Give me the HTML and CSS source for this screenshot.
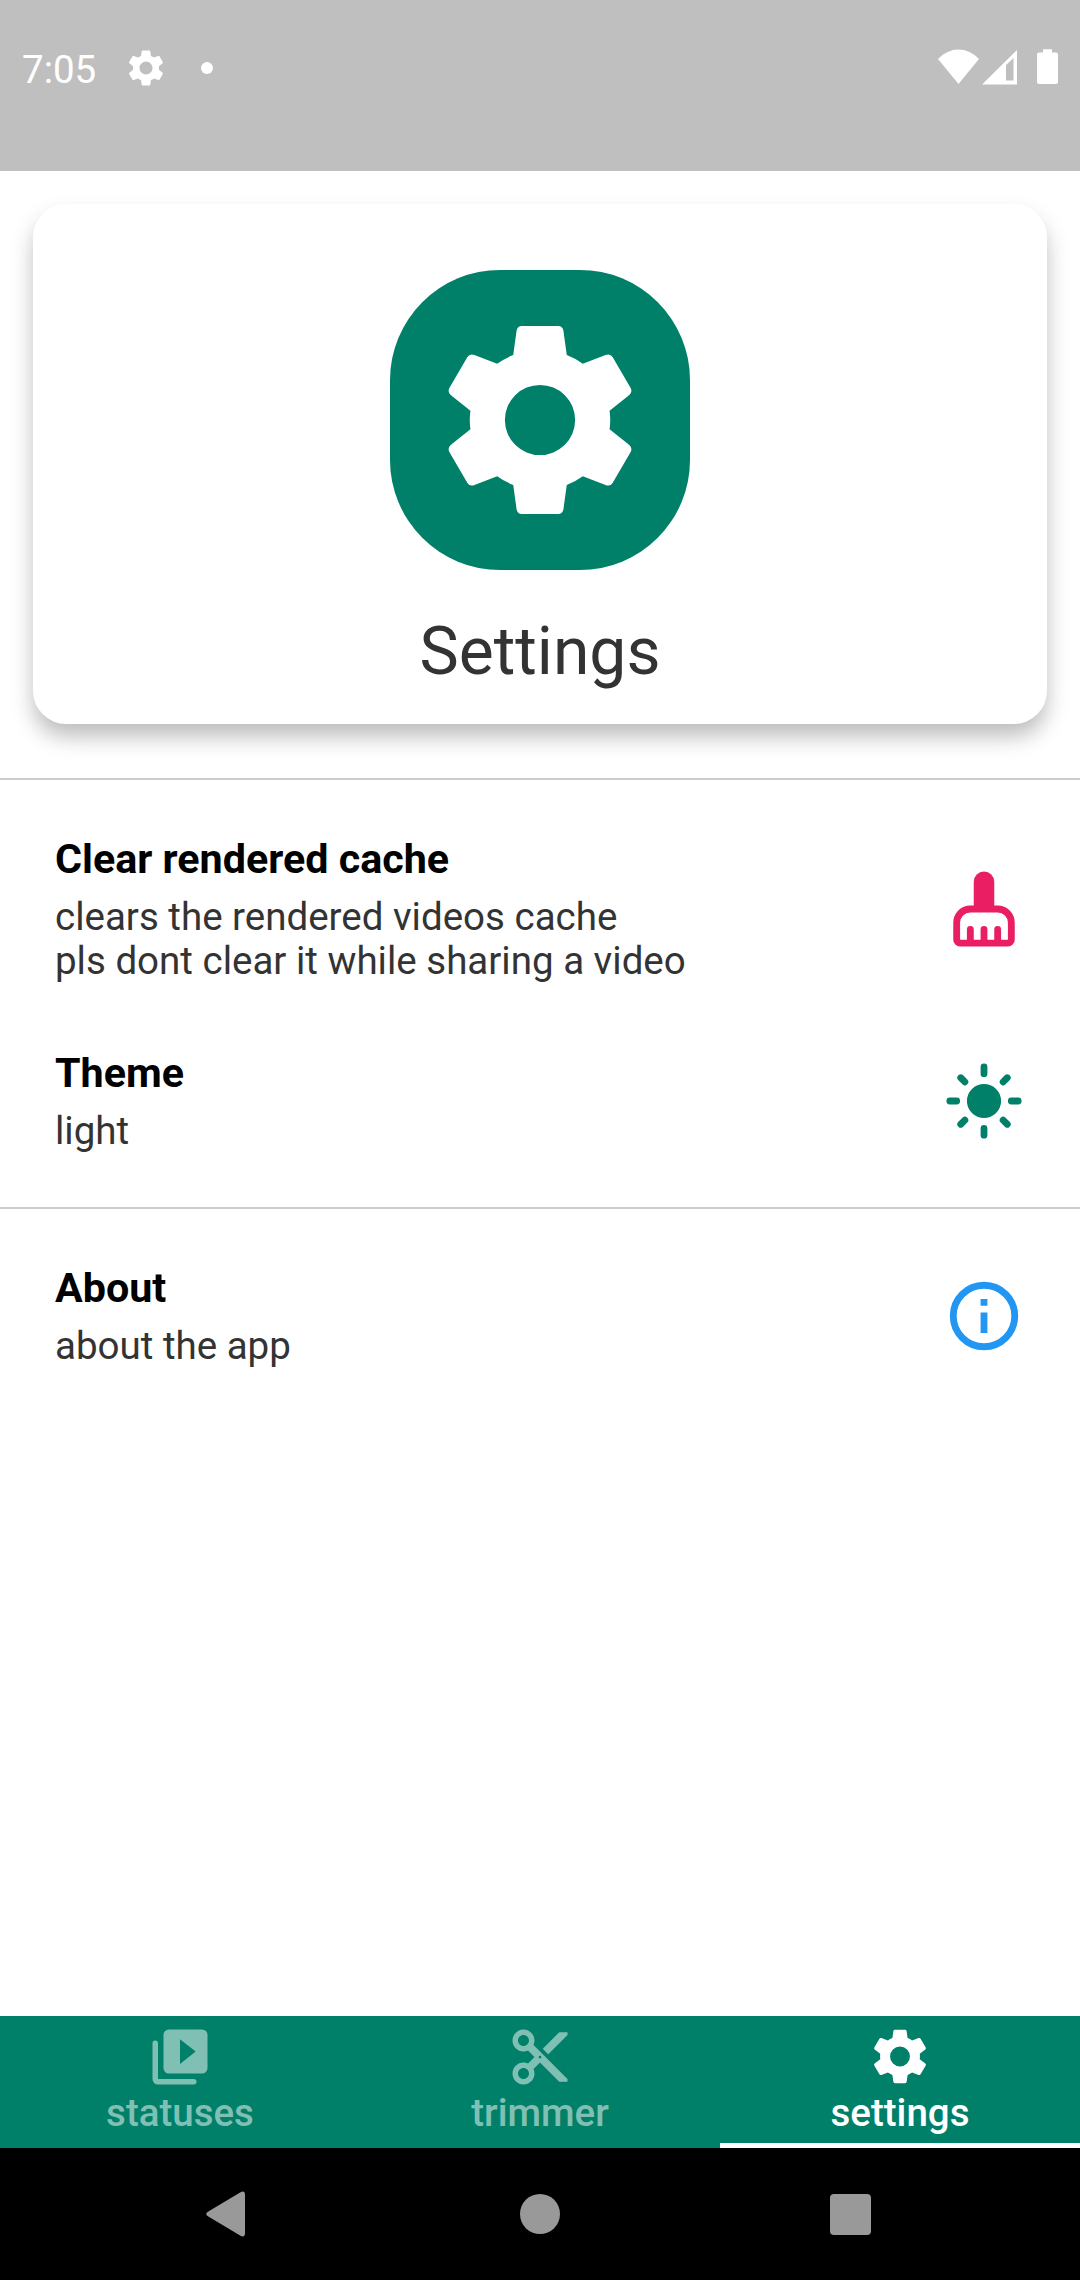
FILE: index.html
```html
<!DOCTYPE html>
<html lang="en">
<head>
<meta charset="utf-8">
<title>Settings</title>
<link rel="stylesheet" href="styles.css">
</head>
<body>
<svg class="defs" width="0" height="0" aria-hidden="true">
  <symbol id="gear" viewBox="-290 -290 580 580">
    <path fill="currentColor" fill-rule="evenodd" d="M-80-194L-70-267Q-68-281-54-281H54Q68-281 70-267L80-194Q106-184 128-168L196-194Q210-199 217-188L271-96Q277-84 267-75L208-28Q212 0 208 28L267 75Q277 84 271 96L217 188Q210 199 196 194L128 168Q106 184 80 194L70 267Q68 281 54 281H-54Q-68 281-70 267L-80 194Q-106 184-128 168L-196 194Q-210 199-217 188L-271 96Q-277 84-267 75L-208 28Q-212 0-208-28L-267-75Q-277-84-271-96L-217-188Q-210-199-196-194L-128-168Q-106-184-80-194ZM0-105A105 105 0 1 0 0 105A105 105 0 1 0 0-105Z"/>
  </symbol>
</svg>
<div class="screen">
  <header class="status-bar">
    <span class="clock">7:05</span>
    <svg class="status-gear"><use href="#gear"/></svg>
    <span class="dot"></span>
    <svg class="status-icons" viewBox="0 0 122 40">
      <path fill="#fff" d="M0 12Q9 2.500 20.500 2.500T41 12L20.500 37Z"/>
      <path fill="#fff" fill-rule="evenodd" d="M44 37.500L79 3V37.500ZM68 18V33.500H75.500V11Z"/>
      <path fill="#fff" d="M105 2.200H114V5.500H118Q120 5.500 120 7.500V35Q120 37 118 37H101Q99 37 99 35V7.500Q99 5.500 101 5.500H105Z"/>
    </svg>
  </header>
  <main class="content">
    <section class="card">
      <div class="badge"><svg><use href="#gear"/></svg></div>
      <h1>Settings</h1>
    </section>
    <section class="group">
      <div class="row">
        <div><h2>Clear rendered cache</h2><p>clears the rendered videos cache<br>pls dont clear it while sharing a video</p></div>
        <svg class="icon pink" viewBox="0 0 24 24">
          <path fill="currentColor" d="M9 12V4a3 3 0 0 1 6 0v8z"/>
          <path d="M8 12h8a4 4 0 0 1 4 4v5a1 1 0 0 1-1 1H5a1 1 0 0 1-1-1v-5a4 4 0 0 1 4-4zM8 22v-4M12 22v-4M16 22v-4" fill="none" stroke="currentColor" stroke-width="2" stroke-linecap="round"/>
        </svg>
      </div>
      <div class="row">
        <div><h2>Theme</h2><p>light</p></div>
        <svg class="icon green" viewBox="0 0 24 24">
          <circle cx="12" cy="12" r="5" fill="currentColor"/>
          <path d="M12 2v2M12 20v2M2 12h2M20 12h2M5.200 5.200l1.200 1.200M17.600 17.600l1.200 1.200M5.200 18.800l1.200-1.200M17.600 6.400l1.200-1.200" fill="none" stroke="currentColor" stroke-width="2" stroke-linecap="round"/>
        </svg>
      </div>
    </section>
    <section class="group">
      <div class="row">
        <div><h2>About</h2><p>about the app</p></div>
        <svg class="icon blue" viewBox="0 0 24 24">
          <circle cx="12" cy="12" r="9" fill="none" stroke="currentColor" stroke-width="2"/>
          <path fill="currentColor" d="M11 7h2v2h-2zM11 11h2v6h-2z"/>
        </svg>
      </div>
    </section>
  </main>
  <nav class="tabs">
    <div class="tab">
      <svg viewBox="0 0 24 24">
        <path fill="currentColor" fill-rule="evenodd" d="M8 2h12a2 2 0 0 1 2 2v12a2 2 0 0 1-2 2H8a2 2 0 0 1-2-2V4a2 2 0 0 1 2-2zM12 5.500v9l5.700-4.500z"/>
        <path d="M3 7v13a1 1 0 0 0 1 1h13" fill="none" stroke="currentColor" stroke-width="2" stroke-linecap="round"/>
      </svg>
      <span>statuses</span>
    </div>
    <div class="tab">
      <svg viewBox="0 0 24 24"><path fill="currentColor" d="M9.640 7.640c.23-.5.36-1.050.36-1.640 0-2.210-1.790-4-4-4S2 3.790 2 6s1.790 4 4 4c.59 0 1.140-.13 1.640-.36L10 12l-2.360 2.360C7.140 14.130 6.590 14 6 14c-2.210 0-4 1.790-4 4s1.790 4 4 4 4-1.790 4-4c0-.59-.13-1.140-.36-1.640L12 14l7 7h3v-1L9.640 7.640zM6 8c-1.100 0-2-.89-2-2s.9-2 2-2 2 .89 2 2-.9 2-2 2zm0 12c-1.100 0-2-.89-2-2s.9-2 2-2 2 .89 2 2-.9 2-2 2zm6-7.500c-.28 0-.5-.22-.5-.5s.22-.5.5-.5.5.22.5.5-.22.5-.5.5zM19 3l-6 6 2 2 7-7V3z"/></svg>
      <span>trimmer</span>
    </div>
    <div class="tab active">
      <svg class="tab-gear"><use href="#gear"/></svg>
      <span>settings</span>
    </div>
  </nav>
  <footer class="nav-bar">
    <svg viewBox="0 0 40 46"><path fill="#999" d="M1.500 21L34.500 1.200Q39 -.8 39 4V42Q39 46.800 34.500 44.800L1.500 25Q-1 23 1.500 21Z"/></svg>
    <span class="home"></span>
    <span class="recent"></span>
  </footer>
</div>
</body>
</html>
```
FILE: styles.css
```css
* { box-sizing: border-box; }
body {
  margin: 0;
  background: #fff;
  font-family: Roboto, "Noto Sans", sans-serif;
}
h1, h2, p { margin: 0; }
svg { display: block; flex: none; }
.defs { position: absolute; }

.screen {
  display: flex;
  flex-direction: column;
  width: 1080px;
  height: 2280px;
  overflow: hidden;
}

/* Status bar */
.status-bar {
  display: flex;
  align-items: center;
  height: 171px;
  padding: 0 20px 36px 22px;
  background: #bfbfbf;
  color: #fff;
}
.clock { width: 106px; font-size: 38.500px; line-height: 46px; padding-top: 4px; }
.status-gear { width: 36px; height: 36px; }
.dot { width: 12px; height: 12px; margin-left: 37px; border-radius: 50%; background: #fff; }
.status-icons { width: 122px; height: 40px; margin: -1px 0 0 auto; }

/* Content */
.content { flex: 1; }
.card {
  display: flex;
  flex-direction: column;
  align-items: center;
  height: 520px;
  margin: 33px 33px 54px;
  padding-top: 66px;
  border-radius: 33px;
  background: #fff;
  box-shadow: 0 13px 22px -1px rgba(0, 0, 0, .27);
}
.badge {
  display: grid;
  place-items: center;
  width: 300px;
  height: 300px;
  border-radius: 110px;
  background: #008069;
  color: #fff;
}
.badge svg { width: 194px; height: 194px; }
.card h1 {
  margin-top: 43px;
  font-size: 66px;
  font-weight: 400;
  line-height: 78px;
  color: #333;
}

.group {
  display: flex;
  flex-direction: column;
  gap: 66px;
  padding: 55px 55px 54px;
  border-top: 2px solid #ccc;
}
.row { display: flex; align-items: center; justify-content: space-between; }
.row h2 { font-size: 41.250px; font-weight: 700; line-height: 48px; color: #000; }
.row p { margin-top: 12px; font-size: 38.500px; line-height: 44px; color: #333; }
.icon { width: 82px; height: 82px; }
.pink { color: #e91e63; }
.green { color: #008069; }
.blue { color: #2196f3; }

/* Tabs */
.tabs {
  display: grid;
  grid-template-columns: repeat(3, 1fr);
  height: 132px;
  background: #008069;
}
.tab {
  display: flex;
  flex-direction: column;
  align-items: center;
  padding-top: 8px;
  border-bottom: 5.500px solid transparent;
  color: #80c0b4;
  font-size: 38.500px;
  font-weight: 500;
  line-height: 46px;
}
.tab svg { width: 66px; height: 66px; }
.tab .tab-gear { width: 56px; height: 55px; margin: 5px 0 6px; }
.active { border-color: #fff; color: #fff; }

/* System navigation */
.nav-bar {
  display: flex;
  align-items: center;
  height: 132px;
  padding: 0 209px 0 206px;
  justify-content: space-between;
  background: #000;
}
.nav-bar svg { width: 40px; height: 46px; }
.home { width: 40px; height: 40px; margin-left: 4px; border-radius: 50%; background: #999; }
.recent { width: 41px; height: 41px; border-radius: 4px; background: #999; }
```
